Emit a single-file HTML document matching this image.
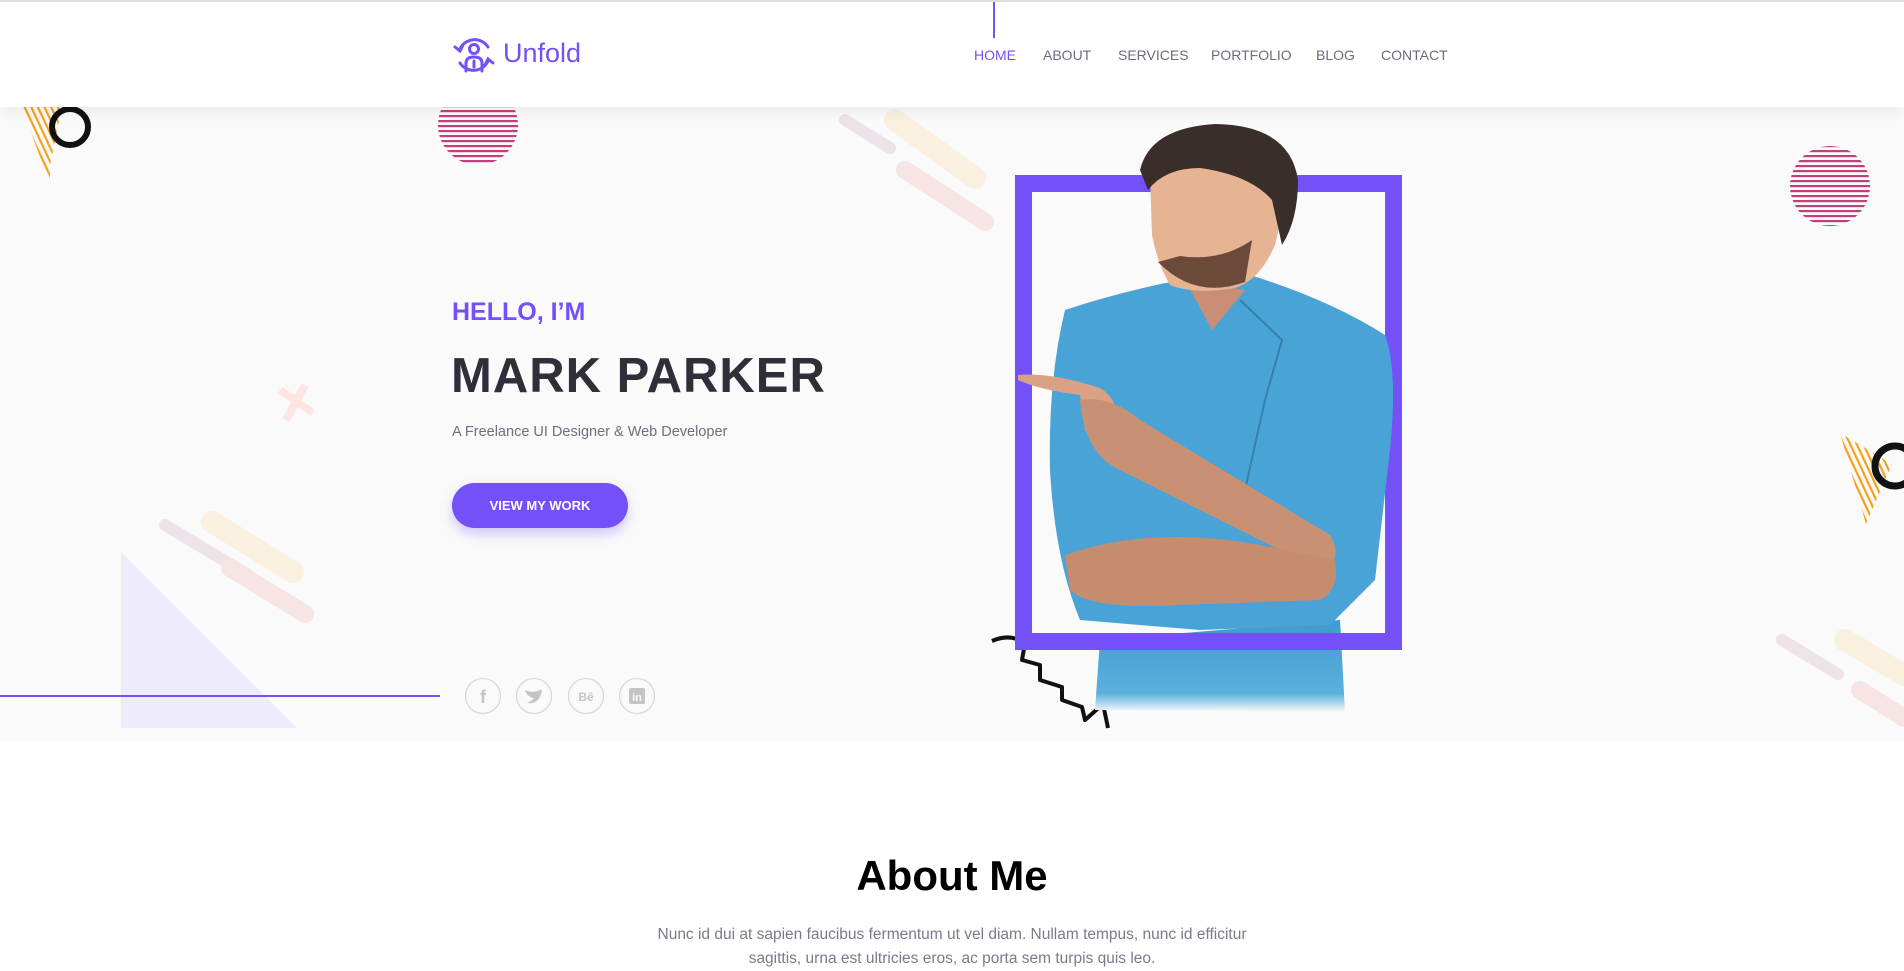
<!DOCTYPE html>
<html><head><meta charset="utf-8"><style>
*{margin:0;padding:0;box-sizing:border-box}
body{width:1904px;height:971px;overflow:hidden;background:#fff;font-family:"Liberation Sans",sans-serif;position:relative}
.hdr{position:absolute;left:0;top:0;width:1904px;height:107px;background:#fff;border-top:2px solid #ddd;box-shadow:0 4px 14px rgba(0,0,0,.07);z-index:5}
.hero{position:absolute;left:0;top:107px;width:1904px;height:634px;background:#fafafa}
.nav a{position:absolute;top:45px;font-size:14px;color:#6c6c80;text-decoration:none}
.abs{position:absolute}
</style></head><body>
<div class="hero"></div>
<svg class="abs" style="left:0;top:0;z-index:1" width="1904" height="971">
<defs>
<pattern id="hs" width="8" height="5" patternUnits="userSpaceOnUse"><rect width="8" height="2.2" fill="#c2407a"/></pattern>
<pattern id="ds" width="6" height="6" patternUnits="userSpaceOnUse" patternTransform="rotate(-25)"><rect width="2.2" height="6" fill="#f5a21b"/></pattern>
<linearGradient id="fade" x1="0" y1="0" x2="0" y2="1"><stop offset="0" stop-color="#3e9bd0"/><stop offset=".8" stop-color="#5cb0dc"/><stop offset="1" stop-color="#fafafa"/></linearGradient>
</defs>
<polygon points="121,552 297,728 121,728" fill="#eeebfd"/>
<g stroke-linecap="round">
<line x1="165" y1="525" x2="250" y2="576" stroke="#efe3ea" stroke-width="12"/>
<line x1="212" y1="522" x2="293" y2="572" stroke="#faf0e0" stroke-width="22"/>
<line x1="230" y1="568" x2="305" y2="614" stroke="#f7e4e4" stroke-width="18"/>
<line x1="845" y1="120" x2="890" y2="148" stroke="#efe3ea" stroke-width="12"/>
<line x1="895" y1="120" x2="975" y2="178" stroke="#faf0e0" stroke-width="22"/>
<line x1="905" y1="170" x2="985" y2="222" stroke="#f7e4e4" stroke-width="18"/>
<line x1="1782" y1="640" x2="1838" y2="674" stroke="#efe3ea" stroke-width="12"/>
<line x1="1845" y1="640" x2="1904" y2="675" stroke="#faf0e0" stroke-width="22"/>
<line x1="1860" y1="690" x2="1904" y2="718" stroke="#f7e4e4" stroke-width="18"/>
</g>
<g stroke="#fde6e2" stroke-width="8"><line x1="280" y1="390" x2="313" y2="413"/><line x1="305" y1="385" x2="286" y2="420"/></g>
<polygon points="22,107 62,107 50,165 50,185" fill="url(#ds)"/>
<circle cx="70" cy="127" r="18" fill="none" stroke="#111" stroke-width="6"/>
<polygon points="1840,433 1892,464 1866,524" fill="url(#ds)"/>
<circle cx="1895" cy="466" r="20" fill="none" stroke="#111" stroke-width="7"/>
<clipPath id="c1"><circle cx="478" cy="125" r="40"/></clipPath>
<rect x="438" y="107" width="80" height="58" fill="url(#hs)" clip-path="url(#c1)"/>
<clipPath id="c2"><circle cx="1830" cy="186" r="40"/></clipPath>
<rect x="1790" y="146" width="80" height="80" fill="url(#hs)" clip-path="url(#c2)"/>
<line x1="0" y1="696" x2="440" y2="696" stroke="#7350f7" stroke-width="2"/>
<path d="M992 641 Q1010 633 1025 643 L1022 660 L1040 665 L1040 680 L1062 687 L1062 700 L1082 707 L1085 720 L1103 704 L1108 728" fill="none" stroke="#111" stroke-width="4" stroke-linejoin="round"/>
<rect x="1023.5" y="183.5" width="370" height="458" fill="none" stroke="#7350f7" stroke-width="17"/>
<path d="M1100 640 L1095 710 L1345 712 L1340 620 Z" fill="url(#fade)"/>
<path d="M1065 310 Q1110 295 1165 283 L1250 275 Q1330 300 1385 335 Q1398 370 1390 450 L1375 580 L1330 625 L1200 630 L1080 620 Q1055 560 1050 470 Q1048 380 1065 310Z" fill="#4aa3d6"/>
<path d="M1240 300 L1282 340 L1265 400 L1245 490" stroke="#357fae" stroke-width="2" fill="none"/>
<path d="M1185 280 L1212 330 L1245 290 Z" fill="#c98f74"/>
<path d="M1150 175 Q1162 150 1205 145 Q1255 140 1275 175 Q1285 210 1275 245 Q1260 280 1235 288 Q1195 295 1170 285 Q1158 265 1152 235 Z" fill="#e6b393"/>
<path d="M1158 262 Q1195 300 1245 282 L1252 240 Q1220 262 1180 256 Z" fill="#6b4a3a"/>
<path d="M1140 170 Q1150 128 1215 124 Q1290 125 1298 180 Q1298 220 1282 245 L1272 200 Q1250 175 1200 168 Q1165 168 1148 190 Z" fill="#3a2e2a"/>
<path d="M1018 375 Q1050 372 1100 388 Q1120 400 1115 425 Q1100 450 1085 430 L1080 395 Q1040 390 1018 380Z" fill="#d9a285"/>
<path d="M1080 400 Q1110 395 1140 420 L1330 535 Q1345 560 1320 570 L1120 470 Q1085 455 1080 400Z" fill="#c99173"/>
<path d="M1065 555 Q1150 525 1260 545 L1335 560 Q1340 590 1320 600 L1180 605 Q1090 610 1070 590Z" fill="#c58d6e"/>
<rect x="1015" y="633" width="387" height="17" fill="#7350f7"/>
<g fill="none" stroke="#d9d9d9" stroke-width="1.3">
<circle cx="483" cy="696" r="17.5"/><circle cx="534" cy="696" r="17.5"/><circle cx="586" cy="696" r="17.5"/><circle cx="637" cy="696" r="17.5"/>
</g>
<g fill="#c4c4c4" font-family="Liberation Sans" font-weight="bold" text-anchor="middle">
<text x="483" y="703" font-size="18">f</text>
<path d="M525 690 Q534 694 542 689 Q540 705 527 703 Q533 700 534 698 Q527 697 525 690Z"/>
<text x="586" y="701" font-size="12">Bē</text>
<rect x="629" y="688" width="16" height="16" rx="2"/>
</g>
<text x="637" y="701" font-size="11" fill="#fafafa" font-weight="bold" text-anchor="middle" font-family="Liberation Sans">in</text>
</svg>
<div class="hdr">
<svg class="abs" style="left:452px;top:33px" width="44" height="40" viewBox="0 0 44 40" fill="none" stroke="#7350f7" stroke-width="3" stroke-linecap="round">
<path d="M8 14 A16 16 0 0 1 36 12"/><path d="M3 12 L8 16 L11 10"/>
<path d="M36 26 A16 16 0 0 1 8 28"/><path d="M41 28 L36 24 L33 30"/>
<circle cx="22" cy="14" r="4.5"/><path d="M14 36 V28 Q14 22 22 22 Q30 22 30 28 V36"/><path d="M22 26 V32"/>
</svg>
<div class="abs" style="left:503px;top:36px;font-size:27px;color:#7350f7">Unfold</div>
<div class="abs" style="left:993px;top:0;width:2px;height:36px;background:#7350f7"></div>
<div class="nav">
<a style="left:974px;color:#7350f7">HOME</a><a style="left:1043px">ABOUT</a><a style="left:1118px">SERVICES</a><a style="left:1211px">PORTFOLIO</a><a style="left:1316px">BLOG</a><a style="left:1381px">CONTACT</a>
</div></div>
<div class="abs" style="left:452px;top:298px;font-size:25px;font-weight:bold;color:#7350f7;z-index:2">HELLO, I’M</div>
<div class="abs" style="left:451px;top:348px;font-size:49px;font-weight:bold;color:#2f2f3a;z-index:2;letter-spacing:1px">MARK PARKER</div>
<div class="abs" style="left:452px;top:424px;font-size:14.5px;color:#6e6e80;z-index:2">A Freelance UI Designer &amp; Web Developer</div>
<div class="abs" style="left:452px;top:483px;width:176px;height:45px;border-radius:23px;background:#7350f7;color:#fff;font-size:13px;font-weight:bold;text-align:center;line-height:45px;box-shadow:0 6px 12px rgba(115,80,247,.3);z-index:2">VIEW MY WORK</div>
<div class="abs" style="left:0;width:1904px;top:852px;text-align:center;font-size:42px;font-weight:bold;color:#000">About Me</div>
<div class="abs" style="left:0;width:1904px;top:923px;text-align:center;font-size:15.5px;color:#7a7a8c;line-height:24px">Nunc id dui at sapien faucibus fermentum ut vel diam. Nullam tempus, nunc id efficitur<br>sagittis, urna est ultricies eros, ac porta sem turpis quis leo.</div>
</body></html>
